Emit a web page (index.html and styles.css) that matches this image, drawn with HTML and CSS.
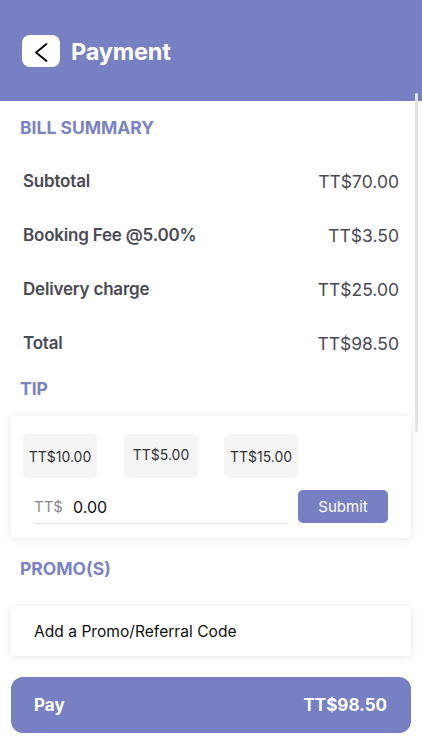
FILE: index.html
```html
<!DOCTYPE html>
<html lang="en">
<head>
    <meta charset="UTF-8">
    <meta name="viewport" content="width=device-width, initial-scale=1.0">
    <title>Payment</title>
    <link rel="stylesheet" href="styles.css">
</head>
<body>
    <div class="header">
        <span class="back">
            <svg width="38" height="32" viewBox="0 0 38 32">
                <path d="M24.5 9 L14 17.5 L24.5 26" fill="none" stroke="#000" stroke-width="1.8" stroke-linecap="round" stroke-linejoin="round"/>
            </svg>
        </span>
        <h1>Payment</h1>
    </div>

    <h2 class="title title-bill">BILL SUMMARY</h2>
    <ul class="rows">
        <li><span>Subtotal</span><em>TT$70.00</em></li>
        <li><span>Booking Fee @5.00%</span><em>TT$3.50</em></li>
        <li><span>Delivery charge</span><em>TT$25.00</em></li>
        <li><span>Total</span><em>TT$98.50</em></li>
    </ul>

    <h2 class="title title-tip">TIP</h2>
    <div class="card tip">
        <div class="chips">
            <span class="chip">TT$10.00</span>
            <span class="chip up">TT$5.00</span>
            <span class="chip">TT$15.00</span>
        </div>
        <div class="tip-input">
            <label class="field">
                <span class="cur">TT$</span>
                <span class="val">0.00</span>
            </label>
            <button class="submit">Submit</button>
        </div>
    </div>

    <h2 class="title title-promo">PROMO(S)</h2>
    <div class="card promo">Add a Promo/Referral Code</div>

    <div class="pay">
        <span>Pay</span>
        <span>TT$98.50</span>
    </div>

    <div class="scroll"></div>
</body>
</html>
```

FILE: styles.css
```css
*{
    margin: 0;
    padding: 0;
    list-style: none;
    box-sizing: border-box;
}
body{
    width: 422px;
    height: 750px;
    background: #fff;
    font-family: Inter, "Noto Sans", sans-serif;
    color: #4a4a55;
    position: relative;
    overflow: hidden;
}
.header{
    height: 101px;
    background-color: #7680c2;
    display: flex;
    align-items: center;
    padding-left: 22px;
    padding-top: 1px;
}
.header .back{
    width: 38px;
    height: 32px;
    background: #fff;
    border-radius: 8px;
    display: block;
}
.header .back svg{
    display: block;
}
.header h1{
    margin-left: 11px;
    font-size: 23.5px;
    font-weight: 700;
    color: #fff;
    letter-spacing: -0.2px;
}
.title{
    margin: 0 20px;
    font-size: 17.5px;
    line-height: 20px;
    font-weight: 700;
    color: #7a83c4;
}
.title-bill{
    margin-top: 17px;
}
.title-tip{
    margin-top: 9px;
}
.title-promo{
    margin-top: 21px;
}
.rows{
    margin-top: 16px;
}
.rows li{
    height: 54px;
    padding: 0 23px;
    display: flex;
    align-items: center;
    justify-content: space-between;
    font-size: 17.5px;
}
.rows li span{
    font-size: 17px;
    font-weight: 600;
    letter-spacing: -0.2px;
}
.rows li em{
    font-style: normal;
    font-weight: 400;
}
.card{
    margin: 0 11px;
    background: #fff;
    box-shadow: 0 1px 8px rgba(0, 0, 0, 0.1);
}
.tip{
    margin-top: 17px;
    height: 122px;
    padding: 18px 12px 0;
}
.chips{
    display: flex;
    gap: 27px;
}
.chip{
    width: 74px;
    height: 44px;
    border-radius: 5px;
    background: #f5f5f5;
    color: #333;
    font-size: 14px;
    display: flex;
    align-items: center;
    justify-content: center;
}
.chip.up{
    padding-bottom: 3px;
}
.chip + .chip + .chip{
    margin-left: -1px;
}
.tip-input{
    margin-top: 12px;
    display: flex;
    align-items: flex-start;
    padding-left: 11px;
}
.field{
    width: 254px;
    height: 34px;
    border-bottom: 1px solid #e2e2e6;
    display: flex;
    align-items: center;
}
.field .cur{
    font-size: 15px;
    color: #8a8a90;
}
.field .val{
    margin-left: 10px;
    font-size: 16px;
    color: #111;
}
.submit{
    margin-left: 10px;
    width: 90px;
    height: 33px;
    border: 0;
    border-radius: 5px;
    background: #7680c2;
    color: #fff;
    font-family: inherit;
    font-size: 15px;
}
.promo{
    margin-top: 27px;
    height: 50px;
    padding-left: 23px;
    display: flex;
    align-items: center;
    font-size: 15.6px;
    color: #111;
}
.pay{
    margin: 21px 11px 0;
    height: 56px;
    border-radius: 12px;
    background: #7680c2;
    color: #fff;
    font-size: 17px;
    font-weight: 700;
    display: flex;
    align-items: center;
    justify-content: space-between;
    padding: 0 24px 0 23px;
}
.scroll{
    position: absolute;
    left: 415px;
    top: 93px;
    width: 3px;
    height: 339px;
    border-radius: 2px;
    background: #e4e4e6;
}
```
